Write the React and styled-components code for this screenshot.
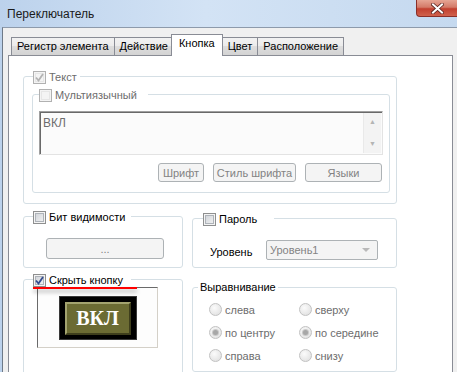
import React from 'react'
import styled, { createGlobalStyle, css } from 'styled-components'

const GlobalStyle = createGlobalStyle`
  html, body {
    margin: 0;
    padding: 0;
  }
  body {
    font-family: "Liberation Sans", Arial, sans-serif;
    font-size: 11px;
    color: #000;
  }
`

const Window = styled.div`
  width: 457px;
  height: 372px;
  overflow: hidden;
  display: flex;
  flex-direction: column;
  background: linear-gradient(to right, #bcd2ec, #d3e3f5 45%, #c5d9ef);
`

const TitleBar = styled.div`
  height: 27px;
  flex: none;
  display: flex;
  align-items: center;
  padding-left: 7px;
`

const Title = styled.span`
  font-size: 12px;
  color: #1b1b1b;
`

const CloseButton = styled.div`
  margin-left: auto;
  align-self: flex-start;
  width: 41px;
  height: 17px;
  box-sizing: border-box;
  border: 1px solid #8a2f28;
  border-top: none;
  border-right: none;
  border-bottom-left-radius: 4px;
  background: linear-gradient(#e6a594, #d47a68 45%, #c2402f 55%, #d0614c);
  display: flex;
  align-items: center;
  justify-content: center;
`

const Client = styled.div`
  flex: 1;
  min-height: 0;
  margin-left: 2px;
  background: #f0f0f0;
  border-top: 1px solid #8d9aab;
  border-left: 1px solid #6e7a88;
  padding: 6px 4px 0 5px;
  display: flex;
  flex-direction: column;
`

const TabRow = styled.div`
  display: flex;
  align-items: flex-end;
  padding-left: 3px;
  height: 21px;
  flex: none;
`

const Tab = styled.div`
  height: 17px;
  line-height: 17px;
  padding: 0 5px;
  border: 1px solid #898c95;
  border-bottom: none;
  margin-right: -1px;
  background: linear-gradient(#f2f2f2, #ebebeb 50%, #dddddd 50%, #d3d3d3);
  white-space: nowrap;
  ${p => p.$active && css`
    height: 21px;
    line-height: 17px;
    background: #fff;
    margin: 0 -1px -1px -2px;
    padding: 0 7px;
    position: relative;
    z-index: 1;
  `}
`

const Panel = styled.div`
  flex: 1;
  background: #fff;
  border: 1px solid #898c95;
  border-bottom: none;
  padding: 15px 0 0 14px;
  display: flex;
  flex-direction: column;
`

const Group = styled.fieldset`
  margin: 0;
  padding: 0;
  min-width: 0;
  box-sizing: border-box;
  border: 1px solid #d5dfe5;
  border-radius: 3px;
  width: ${p => p.$w}px;
  ${p => p.$h && css`height: ${p.$h}px;`}
  ${p => p.$top && css`margin-top: ${p.$top}px;`}
`

const Legend = styled.legend`
  position: relative;
  display: flex;
  align-items: flex-start;
  gap: 3px;
  height: 10px;
  padding: 0 ${p => p.$gap}px 0 0;
  margin-left: ${p => p.$left}px;
  line-height: 13px;
`

const TextLegend = styled.legend`
  height: 14px;
  line-height: 14px;
  padding: 0 2px;
  margin-left: 5px;
`

const Label = styled.span`
  color: ${p => (p.$disabled ? '#6d6d6d' : '#000')};
  white-space: nowrap;
`

const Box = styled.span`
  width: 13px;
  height: 13px;
  flex: none;
  box-sizing: border-box;
  border: 1px solid ${p => (p.$disabled ? '#b1b1b1' : '#8e8f8f')};
  background: ${p => (p.$disabled
    ? '#f4f4f4'
    : 'linear-gradient(135deg, #cbcfd5, #f6f6f6)')};
  box-shadow: inset 0 0 0 1px #f4f4f4,
    inset 0 0 0 2px ${p => (p.$disabled ? '#e6e6e6' : '#aeb3b9')};
  display: flex;
  align-items: center;
  justify-content: center;
`

function CheckBox({ checked, disabled }) {
  return (
    <Box $disabled={disabled}>
      {checked && (
        <svg width="11" height="11" viewBox="0 0 11 11">
          <path
            d="M2 5.5 L4.5 8.5 L9 2"
            fill="none"
            stroke={disabled ? '#b3b3b3' : '#344c8f'}
            strokeWidth="1.8"
          />
        </svg>
      )}
    </Box>
  )
}

const Body = styled.div`
  padding: ${p => p.$pad};
`

const TextBox = styled.div`
  width: 344px;
  height: 44px;
  box-sizing: border-box;
  display: flex;
  border: 1px solid;
  border-color: #a0a0a0 #e3e3e3 #e3e3e3 #a0a0a0;
  box-shadow: inset 1px 1px 0 #696969;
  background: #fbfbfb;
`

const TextValue = styled.div`
  flex: 1;
  padding: 4px 0 0 3px;
  color: #6d6d6d;
  font-size: 12px;
`

const ScrollTrack = styled.div`
  width: 17px;
  margin: 1px 1px 1px 0;
  background: #f3f3f3;
  border-left: 1px solid #e9e9e9;
  display: flex;
  flex-direction: column;
  justify-content: space-between;
  align-items: center;
  padding: 5px 0;
  font-size: 7px;
  color: #b4b4b4;
  line-height: 8px;
`

const ButtonRow = styled.div`
  display: flex;
  justify-content: flex-end;
  margin-top: 8px;
  width: 343px;
  gap: 9px;
`

const Button = styled.div`
  width: ${p => p.$w}px;
  height: ${p => p.$h || 19}px;
  box-sizing: border-box;
  border: 1px solid #adb2b5;
  border-radius: 3px;
  background: #f4f4f4;
  color: #838383;
  white-space: nowrap;
  display: flex;
  align-items: center;
  justify-content: center;
`

const Row = styled.div`
  display: grid;
  grid-template-columns: 160px 205px;
  column-gap: 9px;
  align-items: start;
  margin-top: ${p => p.$top}px;
`

const LevelRow = styled.div`
  display: flex;
  align-items: center;
  padding: 17px 0 0 17px;
`

const LevelLabel = styled.span`
  width: 56px;
  padding-top: 3px;
`

const Select = styled.div`
  width: 112px;
  height: 20px;
  box-sizing: border-box;
  border: 1px solid #adb2b5;
  border-radius: 2px;
  background: #f4f4f4;
  color: #838383;
  display: flex;
  align-items: center;
  justify-content: space-between;
  padding: 0 7px 0 3px;
`

const Arrow = styled.span`
  width: 0;
  height: 0;
  border-left: 4px solid transparent;
  border-right: 4px solid transparent;
  border-top: 4px solid #b9b9b9;
`

const RedMark = styled.span`
  position: absolute;
  left: 0;
  top: 13px;
  width: 104px;
  height: 2px;
  background: #ff0000;
  box-shadow: 0 3px 4px rgba(0, 0, 0, 0.35);
`

const Preview = styled.div`
  width: 121px;
  height: 61px;
  box-sizing: border-box;
  border: 1px solid;
  border-color: #6a6a6a #d4d0c8 #d4d0c8 #6a6a6a;
  background: #fdfdfd;
  display: flex;
  align-items: center;
  justify-content: center;
`

const HmiButton = styled.div`
  width: 76px;
  height: 42px;
  box-sizing: border-box;
  background: #000;
  padding: 5px 5px 4px 5px;
  box-shadow: 0 0 0 1px #3a3a3a;
`

const HmiFace = styled.div`
  height: 100%;
  box-sizing: border-box;
  border: 2px solid;
  border-color: #a3a36f #3e3e1c #3e3e1c #a3a36f;
  background: #6b6b33;
  color: #fff;
  font-family: "Liberation Serif", "Times New Roman", serif;
  font-weight: bold;
  font-size: 20px;
  display: flex;
  align-items: center;
  justify-content: center;
`

const RadioGrid = styled.div`
  display: grid;
  grid-template-columns: 90px 90px;
  grid-auto-rows: 23px;
  padding: 4px 0 0 16px;
`

const RadioItem = styled.div`
  display: flex;
  align-items: center;
  gap: 3px;
`

const RadioDot = styled.span`
  width: 13px;
  height: 13px;
  box-sizing: border-box;
  border-radius: 50%;
  border: 1px solid #c2c2c2;
  background: radial-gradient(circle at 40% 35%, #fbfbfb, #dcdcdc);
  display: flex;
  align-items: center;
  justify-content: center;
  ${p => p.$checked && css`
    &::after {
      content: '';
      width: 5px;
      height: 5px;
      border-radius: 50%;
      background: #a7a7a7;
      box-shadow: 0 0 0 1px #c9c9c9;
    }
  `}
`

const tabs = ['Регистр элемента', 'Действие', 'Кнопка', 'Цвет', 'Расположение']

const aligns = [
  { label: 'слева' },
  { label: 'сверху' },
  { label: 'по центру', checked: true },
  { label: 'по середине', checked: true },
  { label: 'справа' },
  { label: 'снизу' },
]

export default function App() {
  return (
    <>
      <GlobalStyle />
      <Window>
        <TitleBar>
          <Title>Переключатель</Title>
          <CloseButton>
            <svg width="13" height="11" viewBox="0 0 13 11">
              <path d="M2 1.5 L11 9.5 M11 1.5 L2 9.5" stroke="#5a2520" strokeWidth="3.6" strokeLinecap="square" />
              <path d="M2 1.5 L11 9.5 M11 1.5 L2 9.5" stroke="#fff" strokeWidth="2" strokeLinecap="square" />
            </svg>
          </CloseButton>
        </TitleBar>
        <Client>
          <TabRow>
            {tabs.map(t => (
              <Tab key={t} $active={t === 'Кнопка'}>{t}</Tab>
            ))}
          </TabRow>
          <Panel>
            <Group $w={374}>
              <Legend $left={9} $gap={3}>
                <CheckBox checked disabled />
                <Label $disabled>Текст</Label>
              </Legend>
              <Body $pad="8px 6px 10px 8px">
                <Group $w={358}>
                  <Legend $left={6} $gap={11}>
                    <CheckBox disabled />
                    <Label $disabled>Мультиязычный</Label>
                  </Legend>
                  <Body $pad="12px 6px 10px 6px">
                    <TextBox>
                      <TextValue>ВКЛ</TextValue>
                      <ScrollTrack>
                        <span>▲</span>
                        <span>▼</span>
                      </ScrollTrack>
                    </TextBox>
                    <ButtonRow>
                      <Button $w={46}>Шрифт</Button>
                      <Button $w={83}>Стиль шрифта</Button>
                      <Button $w={77}>Языки</Button>
                    </ButtonRow>
                  </Body>
                </Group>
              </Body>
            </Group>

            <Row $top={7}>
              <Group $w={160} $h={57}>
                <Legend $left={9} $gap={6}>
                  <CheckBox />
                  <Label>Бит видимости</Label>
                </Legend>
                <Body $pad="17px 0 0 22px">
                  <Button $w={118} $h={21}>...</Button>
                </Body>
              </Group>
              <Group $w={205} $h={55} $top={2}>
                <Legend $left={10} $gap={17}>
                  <CheckBox />
                  <Label>Пароль</Label>
                </Legend>
                <LevelRow>
                  <LevelLabel>Уровень</LevelLabel>
                  <Select>
                    <span>Уровень1</span>
                    <Arrow />
                  </Select>
                </LevelRow>
              </Group>
            </Row>

            <Row $top={6}>
              <Group $w={160} $h={110}>
                <Legend $left={9} $gap={8}>
                  <CheckBox checked />
                  <Label>Скрыть кнопку</Label>
                  <RedMark />
                </Legend>
                <Body $pad="3px 0 0 13px">
                  <Preview>
                    <HmiButton>
                      <HmiFace>ВКЛ</HmiFace>
                    </HmiButton>
                  </Preview>
                </Body>
              </Group>
              <Group $w={205} $h={92} $top={6}>
                <TextLegend>Выравнивание</TextLegend>
                <RadioGrid>
                  {aligns.map(a => (
                    <RadioItem key={a.label}>
                      <RadioDot $checked={a.checked} />
                      <Label $disabled>{a.label}</Label>
                    </RadioItem>
                  ))}
                </RadioGrid>
              </Group>
            </Row>
          </Panel>
        </Client>
      </Window>
    </>
  )
}
